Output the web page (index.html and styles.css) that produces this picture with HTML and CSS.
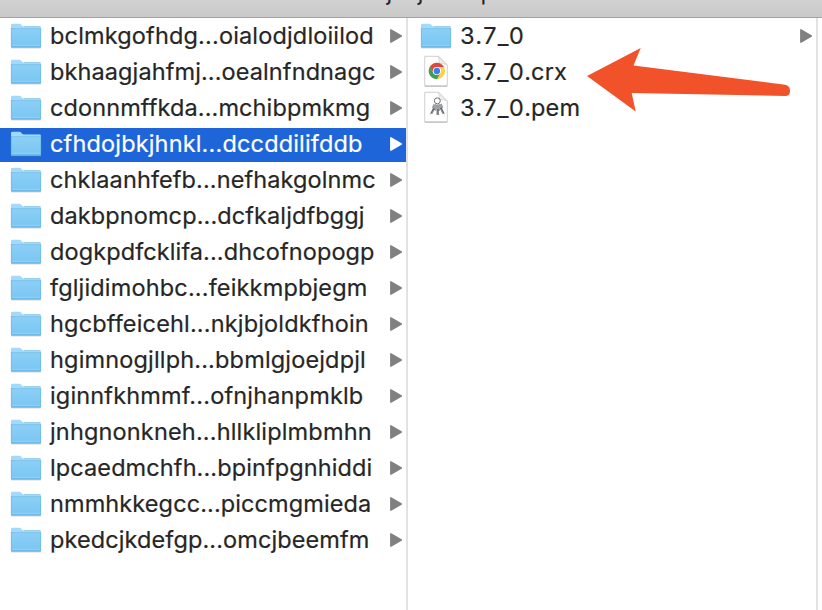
FILE: index.html
```html
<!DOCTYPE html>
<html lang="en">
<head>
<meta charset="utf-8">
<title>Finder</title>
<link rel="stylesheet" href="styles.css">
</head>
<body>
<svg class="defs" width="0" height="0" aria-hidden="true">
  <defs>
    <linearGradient id="front" x1="0" y1="0" x2="0" y2="1"><stop offset="0" stop-color="#8bcff6"/><stop offset="1" stop-color="#79c5f3"/></linearGradient>
    <symbol id="folder" viewBox="0 0 32 28">
      <path d="M1 25.5h30v1H1z" fill="#777" opacity=".3"/>
      <path d="M1 3Q1 1.8 2.7 1.8H9c1.3 0 1.8.4 2.5 1.3.8 1.2 1.5 1.4 3 1.4h15Q31 4.5 31 6v18.8q0 .8-.8.8H1.8q-.8 0-.8-.8z" fill="#a2dbfa"/>
      <path d="M1 7h30v17.8q0 .8-.8.8H1.8q-.8 0-.8-.8z" fill="url(#front)"/>
      <path d="M1 6.6h30" stroke="#68b4df" stroke-width=".6"/>
      <path d="M1.4 23.3h29.2" stroke="#9bd9fa" stroke-width=".7"/>
      <path d="M1.3 25h29.4" stroke="#5ba9d5" stroke-width=".8"/>
      <path d="M14 4.6h16.5M1.3 6v19M30.7 6v19" fill="none" stroke="#67b5df" stroke-width=".6"/>
    </symbol>
    <symbol id="arrow" viewBox="0 0 12 14"><path d="M.9.9 11.2 7 .9 13.1z" fill="currentColor" stroke="currentColor" stroke-width="1.6" stroke-linejoin="round"/></symbol>
    <symbol id="page" viewBox="0 0 26 32">
      <path d="M2 1.3h13.5L24.3 10v20.2q0 .8-.8.8h-21q-.8 0-.8-.8V2q0-.7.6-.7z" fill="#fff" stroke="#c4c4c4" stroke-width=".8"/>
      <path d="M1.6 31.1h22.8" stroke="#aaa" stroke-width=".8"/>
      <path d="M15.3 1.3q1.3 3.5.7 7.2 4-.4 8.3 1.5z" fill="#ededed" stroke="#c9c9c9" stroke-width=".6"/>
    </symbol>
  </defs>
</svg>
<div class="window">
  <header class="titlebar"><span class="title">cfhdojbkjhnklbpkdaibdccddilifddb</span></header>
  <main class="columns">
    <ul class="column parents">
      <li class="row"><svg class="folder"><use href="#folder"/></svg><span class="name loose">bclmkgofhdg...oialodjdloiilod</span><svg class="arrow"><use href="#arrow"/></svg></li>
      <li class="row"><svg class="folder"><use href="#folder"/></svg><span class="name">bkhaagjahfmj...oealnfndnagc</span><svg class="arrow"><use href="#arrow"/></svg></li>
      <li class="row"><svg class="folder"><use href="#folder"/></svg><span class="name">cdonnmffkda...mchibpmkmg</span><svg class="arrow"><use href="#arrow"/></svg></li>
      <li class="row selected"><svg class="folder"><use href="#folder"/></svg><span class="name loose">cfhdojbkjhnkl...dccddilifddb</span><svg class="arrow"><use href="#arrow"/></svg></li>
      <li class="row"><svg class="folder"><use href="#folder"/></svg><span class="name">chklaanhfefb...nefhakgolnmc</span><svg class="arrow"><use href="#arrow"/></svg></li>
      <li class="row"><svg class="folder"><use href="#folder"/></svg><span class="name">dakbpnomcp...dcfkaljdfbggj</span><svg class="arrow"><use href="#arrow"/></svg></li>
      <li class="row"><svg class="folder"><use href="#folder"/></svg><span class="name">dogkpdfcklifa...dhcofnopogp</span><svg class="arrow"><use href="#arrow"/></svg></li>
      <li class="row"><svg class="folder"><use href="#folder"/></svg><span class="name loose">fgljidimohbc...feikkmpbjegm</span><svg class="arrow"><use href="#arrow"/></svg></li>
      <li class="row"><svg class="folder"><use href="#folder"/></svg><span class="name loose">hgcbffeicehl...nkjbjoldkfhoin</span><svg class="arrow"><use href="#arrow"/></svg></li>
      <li class="row"><svg class="folder"><use href="#folder"/></svg><span class="name loose">hgimnogjllph...bbmlgjoejdpjl</span><svg class="arrow"><use href="#arrow"/></svg></li>
      <li class="row"><svg class="folder"><use href="#folder"/></svg><span class="name loose">iginnfkhmmf...ofnjhanpmklb</span><svg class="arrow"><use href="#arrow"/></svg></li>
      <li class="row"><svg class="folder"><use href="#folder"/></svg><span class="name loose">jnhgnonkneh...hllkliplmbmhn</span><svg class="arrow"><use href="#arrow"/></svg></li>
      <li class="row"><svg class="folder"><use href="#folder"/></svg><span class="name">lpcaedmchfh...bpinfpgnhiddi</span><svg class="arrow"><use href="#arrow"/></svg></li>
      <li class="row"><svg class="folder"><use href="#folder"/></svg><span class="name">nmmhkkegcc...piccmgmieda</span><svg class="arrow"><use href="#arrow"/></svg></li>
      <li class="row"><svg class="folder"><use href="#folder"/></svg><span class="name">pkedcjkdefgp...omcjbeemfm</span><svg class="arrow"><use href="#arrow"/></svg></li>
    </ul>
    <ul class="column children">
      <li class="row"><svg class="folder"><use href="#folder"/></svg><span class="name"><span class="version">3.7_0</span></span><svg class="arrow"><use href="#arrow"/></svg></li>
      <li class="row">
        <svg class="file" viewBox="0 0 26 32"><use href="#page" width="26" height="32"/>
          <g transform="translate(13.9 16)">
            <circle r="8.2" fill="#fbd04b"/>
            <path d="M-7.1-4.1A8.2 8.2 0 0 1 7.1-4.1L0-4-3.5 2z" fill="#d84b3e"/>
            <path d="M-7.1-4.1A8.2 8.2 0 0 0 0 8.2L3.5 2-3.5 2z" fill="#3f9e59"/>
            <circle r="4.1" fill="#fff"/><circle r="3.2" fill="#3e7eea"/>
          </g>
        </svg><span class="name"><span class="version">3.7_0</span>.crx</span></li>
      <li class="row">
        <svg class="file" viewBox="0 0 26 32"><use href="#page" width="26" height="32"/>
          <g fill="none" stroke="#707579">
            <circle cx="14.3" cy="9.8" r="3" stroke-width="1"/>
            <path d="M13 13.5 8.5 22.5M14.5 13.5v10.5M16 13.5l4.4 9" stroke="#8d9195" stroke-width="2.1"/>
            <path d="M10.8 16.7 7.6 23.2M15.2 17v7M17.6 16l3.6 7.2" stroke="#55595c" stroke-width=".8"/>
            <path d="M9.6 14.9 13.6 16.6M12.8 16.3h4M15.5 16l4-1.6" stroke="#9da1a4" stroke-width="4"/>
            <path d="m10 18 3 1.2M14 19h3M17 17.7l2.5-.8" stroke="#5f6366" stroke-width="1"/>
          </g>
        </svg><span class="name"><span class="version">3.7_0</span>.pem</span></li>
    </ul>
    <div class="preview"></div>
  </main>
  <svg class="pointer" viewBox="0 0 206 66"><path d="M1 30 54.7 2 47.5 19.6 199 38.7q5 1 5 6t-4 5.3L45.7 47l4 18.4z" fill="#f15229"/></svg>
</div>
</body>
</html>
```
FILE: styles.css
```css
* { box-sizing: border-box; }
body { margin: 0; background: #fff; }
.defs { position: absolute; }
.window {
  position: relative;
  display: flex;
  flex-direction: column;
  width: 822px;
  height: 610px;
  overflow: hidden;
  font-family: Inter, "Liberation Sans", sans-serif;
  font-size: 23.5px;
  color: #262626;
}
.titlebar {
  flex: none;
  display: flex;
  align-items: flex-end;
  height: 18px;
  padding: 0 0 17px 325px;
  overflow: hidden;
  background: linear-gradient(#d2d2d2, #c9c9c9);
  border-bottom: 1px solid #a2a2a2;
}
.title { line-height: 28px; margin-bottom: -6px; white-space: nowrap; letter-spacing: -0.6px; }
.columns { flex: 1; display: flex; }
.column {
  display: flex;
  flex-direction: column;
  gap: 2px;
  margin: 0;
  padding: 2px 0 0;
  list-style: none;
}
.parents { width: 408px; border-right: 2px solid #e2e2e2; }
.children { width: 410px; border-right: 2px solid #e2e2e2; }
.row {
  display: flex;
  align-items: center;
  height: 34px;
  padding: 0 4px 0 10px;
}
.children .row { padding-left: 12px; }
.selected { background: #1d65d9; color: #fff; }
.folder { flex: none; width: 32px; height: 28px; margin: -2px 8px 0 0; }
.file { flex: none; width: 26px; height: 32px; margin: -4px 11px 0 3px; }
.name {
  flex: 1;
  line-height: 34px;
  margin-top: -2px;
  white-space: nowrap;
  letter-spacing: 0.1px;
  -webkit-text-stroke: 0.2px currentColor;
}
.loose { letter-spacing: 0.16px; }
.version { font-kerning: none; font-variant-numeric: tabular-nums; letter-spacing: 0.3px; }
.arrow { flex: none; width: 12px; height: 14px; margin-top: -2px; color: #808080; }
.selected .arrow { color: #fff; }
.pointer { position: absolute; left: 586px; top: 46px; width: 206px; height: 66px; }
```
